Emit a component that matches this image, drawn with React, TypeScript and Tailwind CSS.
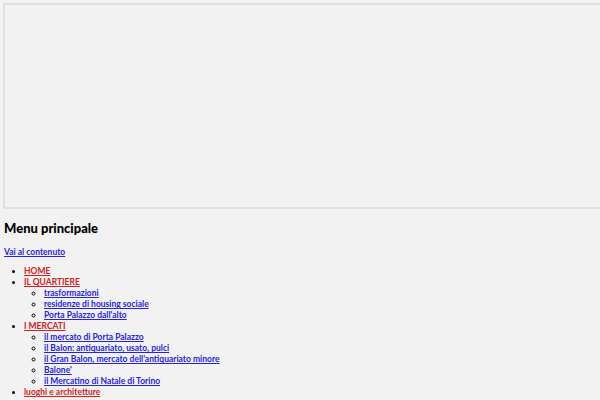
import React from "react";

const sub = (items: string[]) => (
  <ul className="list-[circle] pl-[20px] m-0">
    {items.map((t) => (
      <li key={t} className="leading-[11px]">
        <a href="#" className="text-[#2424e6] underline">{t}</a>
      </li>
    ))}
  </ul>
);

export default function App() {
  return (
    <div className="w-[600px] h-[400px] overflow-hidden bg-[#f2f2f2] font-['Lato',sans-serif] font-bold text-black">
      <div className="w-[600px] h-[206px] ml-[3px] pt-[3px] box-content">
        <div className="w-full h-full border-2 border-[#e0e0e0]" />
      </div>
      <div className="px-[4px]">
        <h2 className="text-[13px] leading-[18px] mt-[10px] font-black">Menu principale</h2>
        <a href="#" className="block mt-[10px] text-[8.5px] leading-[11px] text-[#2424e6] underline">Vai al contenuto</a>
        <ul className="list-disc pl-[20px] mt-[8px] text-[8.5px]">
          <li className="leading-[11px]"><a href="#" className="text-[#d42020] underline">HOME</a></li>
          <li className="leading-[11px]"><a href="#" className="text-[#d42020] underline">IL QUARTIERE</a>
            {sub(["trasformazioni", "residenze di housing sociale", "Porta Palazzo dall'alto"])}
          </li>
          <li className="leading-[11px]"><a href="#" className="text-[#d42020] underline">I MERCATI</a>
            {sub(["il mercato di Porta Palazzo", "il Balon: antiquariato, usato, pulci", "il Gran Balon, mercato dell'antiquariato minore", "Balone'", "il Mercatino di Natale di Torino"])}
          </li>
          <li className="leading-[11px]"><a href="#" className="text-[#d42020] underline">luoghi e architetture</a></li>
        </ul>
      </div>
    </div>
  );
}
